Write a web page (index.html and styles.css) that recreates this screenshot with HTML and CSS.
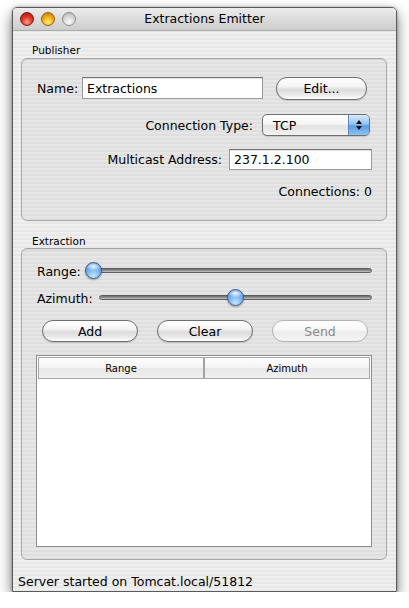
FILE: index.html
```html
<!DOCTYPE html>
<html>
<head>
<meta charset="utf-8">
<link rel="stylesheet" href="styles.css">
</head>
<body>
<div class="window">
  <div class="titlebar">
    <div class="lights">
      <span class="light red"></span>
      <span class="light yellow"></span>
      <span class="light gray"></span>
    </div>
    <div class="title">Extractions Emitter</div>
  </div>
  <div class="content">
    <div class="group-label">Publisher</div>
    <div class="box box-publisher">
      <div class="row row-name">
        <span class="label">Name:</span>
        <div class="field field-name">Extractions</div>
        <div class="button button-edit">Edit...</div>
      </div>
      <div class="row row-right row-conn">
        <span class="label">Connection Type:</span>
        <div class="popup">
          <span class="popup-text">TCP</span>
          <span class="popup-arrows">
            <svg width="8" height="12" viewBox="0 0 8 12"><path d="M4 1 L7 5 L1 5 Z" fill="#111"/><path d="M4 11 L7 7 L1 7 Z" fill="#111"/></svg>
          </span>
        </div>
      </div>
      <div class="row row-right row-mcast">
        <span class="label">Multicast Address:</span>
        <div class="field field-mcast">237.1.2.100</div>
      </div>
      <div class="row row-right row-count">
        <span class="label">Connections: 0</span>
      </div>
    </div>
    <div class="group-label group-label-2">Extraction</div>
    <div class="box box-extraction">
      <div class="row slider-row slider-range">
        <span class="label">Range:</span>
        <div class="slider">
          <div class="track"></div>
          <div class="knob" style="left: calc((100% - 17px) * 0)"></div>
        </div>
      </div>
      <div class="row slider-row slider-azimuth">
        <span class="label">Azimuth:</span>
        <div class="slider">
          <div class="track"></div>
          <div class="knob" style="left: calc((100% - 17px) * 0.5)"></div>
        </div>
      </div>
      <div class="row buttons">
        <div class="button">Add</div>
        <div class="button">Clear</div>
        <div class="button disabled">Send</div>
      </div>
      <div class="table">
        <div class="thead">
          <div class="th th-first">Range</div>
          <div class="th">Azimuth</div>
        </div>
        <div class="tbody"></div>
      </div>
    </div>
    <div class="status">Server started on Tomcat.local/51812</div>
  </div>
</div>
</body>
</html>
```
FILE: styles.css
```css
html, body {
  margin: 0;
  padding: 0;
  background: #ffffff;
}
body {
  font-family: "DejaVu Sans", "Liberation Sans", Arial, sans-serif;
  font-size: 12.5px;
  color: #000;
}
.window {
  margin: 7px 0 0 12px;
  width: 385px;
  height: 585px;
  box-sizing: border-box;
  border: 1px solid #5a5a5a;
  border-radius: 5px 5px 0 0;
  box-shadow: 0 6px 14px rgba(0,0,0,0.55), 0 0 3px rgba(0,0,0,0.3);
  overflow: hidden;
  display: flex;
  flex-direction: column;
  background: repeating-linear-gradient(to bottom, #efefef 0px, #efefef 2px, #e8e8e8 2px, #e8e8e8 4px);
}
.titlebar {
  height: 22px;
  flex: none;
  position: relative;
  display: flex;
  align-items: center;
  background: linear-gradient(to bottom, #ececec 0%, #dcdcdc 50%, #cdcdcd 100%);
  border-bottom: 1px solid #a9a9a9;
}
.lights {
  display: flex;
  gap: 7px;
  margin-left: 7px;
}
.light {
  width: 14px;
  height: 14px;
  border-radius: 50%;
  display: block;
  box-sizing: border-box;
}
.red {
  background: radial-gradient(circle at 50% 75%, #ff9d8c 0%, #e0392b 45%, #a3120c 100%);
  border: 1px solid #7c1a14;
}
.yellow {
  background: radial-gradient(circle at 50% 75%, #ffef7a 0%, #f1b31d 45%, #b9680b 100%);
  border: 1px solid #94610e;
}
.gray {
  background: radial-gradient(circle at 50% 75%, #fafafa 0%, #d8d8d8 50%, #a9a9a9 100%);
  border: 1px solid #8c8c8c;
}
.title {
  position: absolute;
  left: 0;
  right: 0;
  top: 0;
  line-height: 22px;
  text-align: center;
  font-size: 12.5px;
  pointer-events: none;
}
.content {
  flex: 1;
  display: flex;
  flex-direction: column;
  padding: 0 9px 0 8px;
}
.group-label {
  font-size: 10.5px;
  line-height: 13px;
  margin-top: 13px;
  padding-left: 11px;
}
.group-label-2 {
  margin-top: 14px;
}
.box {
  box-sizing: border-box;
  border: 1px solid #a6a6a6;
  border-radius: 6px;
  background: rgba(0,0,0,0.035);
  box-shadow: inset 0 1px 1px rgba(0,0,0,0.06);
  padding: 0 14px 0 15px;
  display: flex;
  flex-direction: column;
}
.box-publisher {
  height: 163px;
  margin-top: 1px;
}
.box-extraction {
  height: 312px;
  margin-top: 0;
}
.row {
  display: flex;
  align-items: center;
}
.row-right {
  justify-content: flex-end;
}
.row-name {
  height: 24px;
  margin-top: 17px;
}
.row-name .label {
  width: 45px;
}
.field {
  box-sizing: border-box;
  background: #fff;
  border: 1px solid #9a9a9a;
  border-top-color: #6e6e6e;
  box-shadow: inset 0 1px 1px rgba(0,0,0,0.12);
  padding: 0 4px;
  display: flex;
  align-items: center;
}
.field-name {
  width: 181px;
  height: 22px;
}
.button {
  box-sizing: border-box;
  height: 22px;
  border: 1px solid #6f6f6f;
  border-radius: 11px;
  background: linear-gradient(to bottom, #ffffff 0%, #f4f4f4 40%, #dcdcdc 55%, #e9e9e9 80%, #ffffff 100%);
  box-shadow: 0 1px 1px rgba(0,0,0,0.15);
  display: flex;
  align-items: center;
  justify-content: center;
}
.button-edit {
  width: 91px;
  margin-left: 13px;
  height: 23px;
}
.row-conn {
  height: 22px;
  margin-top: 14px;
}
.popup {
  box-sizing: border-box;
  width: 108px;
  height: 22px;
  margin-left: 9px;
  margin-right: 2px;
  border: 1px solid #6f6f6f;
  border-radius: 5px;
  background: linear-gradient(to bottom, #ffffff 0%, #f4f4f4 45%, #e2e2e2 55%, #f3f3f3 100%);
  box-shadow: 0 1px 1px rgba(0,0,0,0.15);
  display: flex;
  align-items: stretch;
  overflow: hidden;
}
.popup-text {
  flex: 1;
  padding-left: 10px;
  display: flex;
  align-items: center;
}
.popup-arrows {
  width: 20px;
  border-left: 1px solid #5b87bf;
  background: linear-gradient(to bottom, #d7ebfd 0%, #95c4f1 45%, #5a9ce6 55%, #8dc3f3 100%);
  display: flex;
  align-items: center;
  justify-content: center;
}
.row-mcast {
  height: 21px;
  margin-top: 13px;
}
.field-mcast {
  width: 143px;
  height: 21px;
  margin-left: 7px;
}
.row-count {
  height: 16px;
  margin-top: 13px;
}
.slider-row {
  height: 18px;
}
.slider-range {
  margin-top: 13px;
}
.slider-azimuth {
  margin-top: 9px;
}
.slider-range .label {
  width: 48px;
}
.slider-azimuth .label {
  width: 62px;
}
.slider {
  flex: 1;
  height: 18px;
  position: relative;
}
.track {
  position: absolute;
  left: 0;
  right: 0;
  top: 6px;
  height: 5px;
  box-sizing: border-box;
  border-radius: 3px;
  border: 1px solid #5d5d5d;
  background: linear-gradient(to bottom, #6c6c6c 0%, #9a9a9a 60%, #c9c9c9 100%);
}
.knob {
  position: absolute;
  top: 0;
  width: 17px;
  height: 17px;
  box-sizing: border-box;
  border-radius: 50%;
  border: 1px solid #3f5f8e;
  background:
    radial-gradient(ellipse 55% 30% at 50% 22%, rgba(255,255,255,0.95) 0%, rgba(255,255,255,0) 100%),
    radial-gradient(circle at 50% 85%, #c6e6ff 0%, #6aa9ec 55%, #3a7bd0 100%);
  box-shadow: 0 1px 2px rgba(0,0,0,0.35);
}
.buttons {
  margin-top: 13px;
  padding-left: 5px;
  gap: 19px;
}
.buttons .button {
  width: 96px;
}
.button.disabled {
  color: #8a8a8a;
  border-color: #b3b3b3;
  box-shadow: none;
  background: linear-gradient(to bottom, #ffffff 0%, #f7f7f7 45%, #ececec 55%, #f5f5f5 100%);
}
.table {
  margin-top: 13px;
  margin-left: -1px;
  height: 192px;
  box-sizing: border-box;
  border: 1px solid #8e8e8e;
  background: #fff;
  display: flex;
  flex-direction: column;
}
.thead {
  display: flex;
  height: 22px;
  box-sizing: border-box;
  border: 1px solid #a8a8a8;
  margin: 1px;
  background: linear-gradient(to bottom, #ffffff 0%, #f3f3f3 50%, #e7e7e7 51%, #f0f0f0 100%);
}
.th {
  flex: 1;
  display: flex;
  align-items: center;
  justify-content: center;
  font-size: 10px;
}
.th-first {
  border-right: 2px solid #a3a3a3;
}
.tbody {
  flex: 1;
}
.status {
  margin-top: 14px;
  line-height: 16px;
  margin-left: -3px;
}
```
